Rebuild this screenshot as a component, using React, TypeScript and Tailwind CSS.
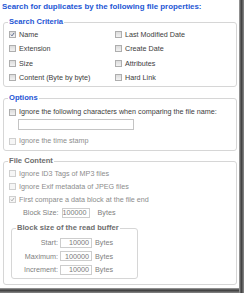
import type { ReactNode } from "react";

const font = { fontFamily: '"Liberation Sans", Arial, sans-serif' };

function Box({ checked, disabled }: { checked?: boolean; disabled?: boolean }) {
  return (
    <span
      className={`flex h-[7px] w-[7px] shrink-0 items-center justify-center border ${
        disabled ? "border-[#cfcfcf] bg-[#f6f6f6]" : "border-[#aeaeae] bg-[linear-gradient(#dcdcdc,#f2f2f2)]"
      }`}
    >
      {checked && (
        <svg viewBox="0 0 7 7" className="h-[7px] w-[7px]">
          <path
            d="M1.2 3.6 L2.8 5.4 L5.8 1.2"
            fill="none"
            stroke={disabled ? "#9a9a9a" : "#3a4a78"}
            strokeWidth="1.1"
          />
        </svg>
      )}
    </span>
  );
}

function Check({
  label,
  checked,
  disabled,
  className = "",
}: {
  label: string;
  checked?: boolean;
  disabled?: boolean;
  className?: string;
}) {
  return (
    <div className={`flex items-center gap-[3px] ${className}`}>
      <Box checked={checked} disabled={disabled} />
      <span className={`whitespace-nowrap ${disabled ? "text-[#8c8c8c]" : "text-[#3c3c3c]"}`}>{label}</span>
    </div>
  );
}

function Group({
  title,
  tone,
  className = "",
  children,
}: {
  title: string;
  tone: "blue" | "gray";
  className?: string;
  children: ReactNode;
}) {
  return (
    <fieldset className={`rounded-[3px] border border-[#d6d6d6] ${className}`}>
      <legend
        className={`ml-[4px] px-[1px] text-[7.6px] font-bold leading-[10px] ${
          tone === "blue" ? "text-[#2456d4]" : "text-[#6e6e6e]"
        }`}
      >
        {title}
      </legend>
      {children}
    </fieldset>
  );
}

function NumField({ value, w }: { value: string; w: string }) {
  return (
    <div
      className={`flex h-[10px] items-center justify-end border border-[#cdcdcd] bg-white pr-[2px] text-[#7a7a7a] ${w}`}
    >
      {value}
    </div>
  );
}

export default function App() {
  const buffer = [
    ["Start:", "10000"],
    ["Maximum:", "100000"],
    ["Increment:", "10000"],
  ];

  return (
    <div className="flex h-[293px] w-[244px] bg-white text-[7.2px] leading-none" style={font}>
      <div className="flex w-[239px] flex-col">
        <div className="flex-1 pt-[2px]">
          <div className="h-[10px] pl-[2px] text-[7.9px] font-bold leading-[10px] text-[#2456d4]">
            Search for duplicates by the following file properties:
          </div>

          <Group title="Search Criteria" tone="blue" className="ml-[3px] mt-[5px] w-[234px] pb-[1px]">
            <div className="grid auto-rows-[14.5px] grid-cols-[106px_1fr] pl-[5px]">
              <Check label="Name" checked />
              <Check label="Last Modified Date" />
              <Check label="Extension" />
              <Check label="Create Date" />
              <Check label="Size" />
              <Check label="Attributes" />
              <Check label="Content (Byte by byte)" />
              <Check label="Hard Link" />
            </div>
          </Group>

          <Group title="Options" tone="blue" className="ml-[3px] mt-[6px] w-[234px] pb-[2px]">
            <div className="pl-[5px]">
              <Check label="Ignore the following characters when comparing the file name:" className="mt-[2px] h-[14px]" />
              <div className="ml-[9px] h-[11px] w-[116px] border border-[#c4c4c4] bg-white" />
              <Check label="Ignore the time stamp" disabled className="mt-[4px] h-[14px]" />
            </div>
          </Group>

          <Group title="File Content" tone="gray" className="ml-[3px] mt-[5px] w-[234px] pb-[5px]">
            <div className="mt-[1px] pl-[5px]">
              <Check label="Ignore ID3 Tags of MP3 files" disabled className="h-[13px]" />
              <Check label="Ignore Exif metadata of JPEG files" disabled className="h-[13px]" />
              <Check label="First compare a data block at the file end" checked disabled className="h-[13px]" />
              <div className="flex h-[13px] items-center text-[#808080]">
                <span className="ml-[14px] whitespace-nowrap">Block Size:</span>
                <span className="w-[3px]" />
                <NumField value="100000" w="w-[28px]" />
                <span className="ml-[8px]">Bytes</span>
              </div>
            </div>
            <Group title="Block size of the read buffer" tone="gray" className="ml-[7px] mt-[4px] w-[127px] pb-[1px]">
              <div className="pt-[3px]">
                {buffer.map(([label, value]) => (
                  <div key={label} className="flex h-[13.5px] items-center text-[#808080]">
                    <span className="w-[46px] text-right">{label}</span>
                    <span className="w-[2px]" />
                    <NumField value={value} w="w-[32px]" />
                    <span className="ml-[3px]">Bytes</span>
                  </div>
                ))}
              </div>
            </Group>
          </Group>
        </div>
        <div className="h-[5px] bg-[linear-gradient(#a8a8a8,#3c3c3c_45%,#8a8a8a)]" />
      </div>
      <div className="w-[5px] bg-[linear-gradient(to_right,#a8a8a8,#3c3c3c_45%,#8a8a8a)]" />
    </div>
  );
}
